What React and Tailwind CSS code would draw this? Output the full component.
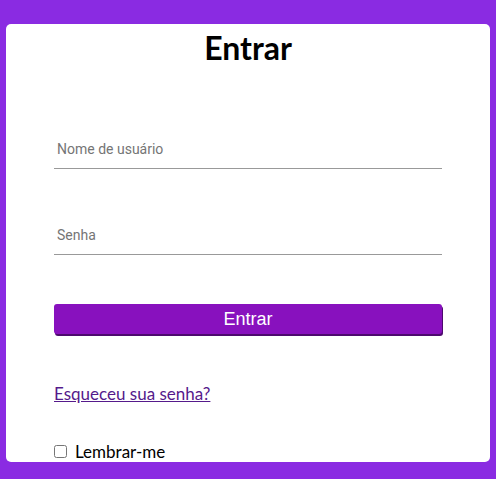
import React from 'react';

function App() {
    return (
        <div className="min-h-[479px] bg-[#8a2be2] px-[6px] pt-[24px]">
            <div className="h-[438px] rounded-[5px] bg-white px-[48px]">
                <h1 className="pt-[4px] text-center text-[32px] font-bold leading-[40px] text-black [font-family:Lato,sans-serif]">
                    Entrar
                </h1>

                <form className="mt-[61px] flex flex-col">
                    <input
                        type="text"
                        placeholder="Nome de usuário"
                        className="h-[40px] w-full border-b border-[#999] px-[3px] text-[14px] outline-none placeholder:text-[#757575] [font-family:Roboto,sans-serif]"
                    />
                    <input
                        type="password"
                        placeholder="Senha"
                        className="mt-[46px] h-[40px] w-full border-b border-[#999] px-[3px] text-[14px] outline-none placeholder:text-[#757575] [font-family:Roboto,sans-serif]"
                    />
                    <button
                        type="button"
                        className="mt-[49px] h-[30px] w-[388px] rounded-[3px] bg-[#8811be] text-[18px] leading-none text-white shadow-[1px_2px_0_#4d0a6e] [font-family:'Liberation_Sans',Arial,sans-serif]"
                    >
                        Entrar
                    </button>
                </form>

                <a href="#" className="mt-[47px] block w-fit text-[17px] text-[#551a8b] underline [font-family:Lato,sans-serif]">
                    Esqueceu sua senha?
                </a>

                <label className="mt-[32px] flex items-center gap-[8px] text-[17px] text-black [font-family:Lato,sans-serif]">
                    <input type="checkbox" className="m-0 h-[13px] w-[13px]" />
                    Lembrar-me
                </label>
            </div>
        </div>
    );
}

export default App;
